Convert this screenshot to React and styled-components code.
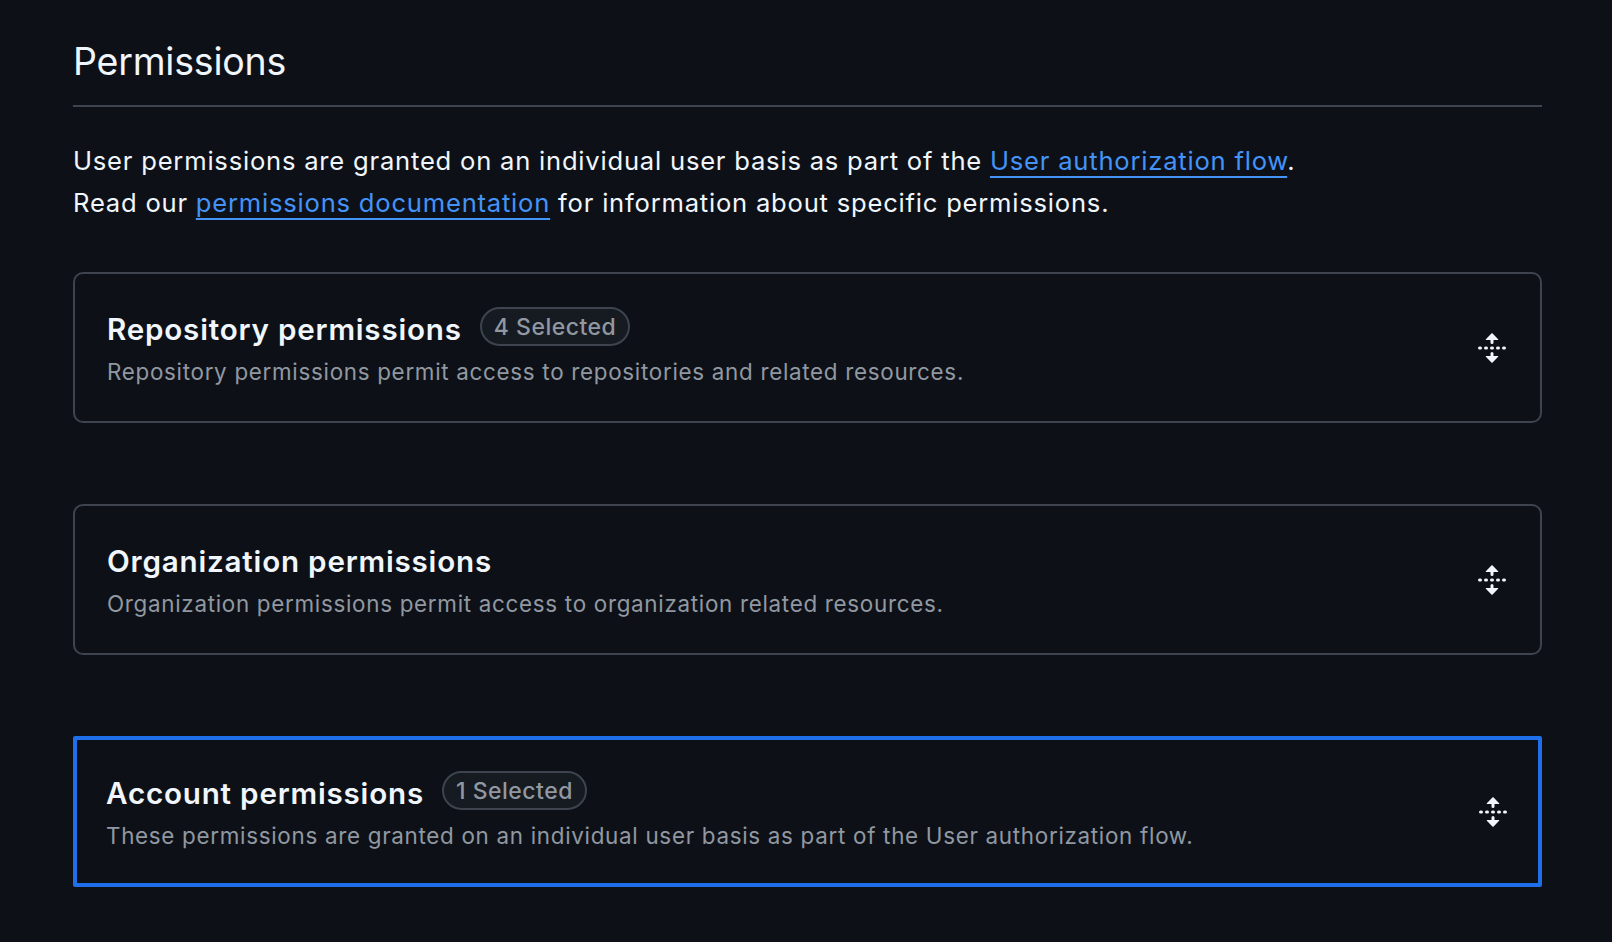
import React from "react"
import styled, { createGlobalStyle } from "styled-components"

const GlobalStyle = createGlobalStyle`
  html, body {
    margin: 0;
    padding: 0;
    background: #0d1117;
  }
  body {
    font-family: Inter, "Noto Sans", "Liberation Sans", sans-serif;
    color: #f0f6fc;
  }
`

const Page = styled.div`
  padding: 33px 70px 40px 73px;
  min-height: 100vh;
  box-sizing: border-box;
  background: #0d1117;
`

const Subhead = styled.div`
  padding-bottom: 15px;
  border-bottom: 2px solid #3d444d;
`

const Heading = styled.h2`
  margin: 0;
  font-size: 37.5px;
  line-height: 57px;
  font-weight: 400;
  letter-spacing: -0.2px;
  color: #f0f6fc;
`

const Intro = styled.p`
  margin: 33px 0 0;
  font-size: 25.6px;
  line-height: 42px;
  letter-spacing: 0.78px;
  color: #f0f6fc;
`

const Link = styled.a`
  color: #4493f8;
  text-decoration: underline;
  text-decoration-thickness: 2px;
  text-underline-offset: 6px;
`

const List = styled.div`
  margin-top: 48px;
  display: flex;
  flex-direction: column;
  gap: 81px;
`

const Card = styled.div`
  display: flex;
  align-items: center;
  justify-content: space-between;
  min-height: 151px;
  box-sizing: border-box;
  padding: ${p => (p.$focused ? "29px" : "32px")};
  border: ${p => (p.$focused ? "4px solid #1f6feb" : "2px solid #3d444d")};
  border-radius: ${p => (p.$focused ? "2px" : "10px")};
`

const Body = styled.div`
  display: flex;
  flex-direction: column;
`

const TitleRow = styled.div`
  display: flex;
  align-items: center;
  gap: 18px;
  height: 48px;
`

const Title = styled.h3`
  margin: 0 0 4px;
  font-size: 29.6px;
  line-height: 44px;
  font-weight: 600;
  letter-spacing: 0.8px;
  color: #f0f6fc;
`

const Badge = styled.span`
  display: inline-flex;
  align-items: center;
  height: 39px;
  margin-bottom: 8px;
  box-sizing: border-box;
  padding: 0 12px;
  border: 2px solid #3d444d;
  border-radius: 999px;
  background: #161b22;
  color: #9198a1;
  font-size: 23px;
  font-weight: 500;
  letter-spacing: 0.5px;
`

const Desc = styled.p`
  margin: 0;
  font-size: 22.4px;
  line-height: 34px;
  letter-spacing: 0.7px;
  color: #9198a1;
`

const Toggle = styled.button`
  display: flex;
  align-items: center;
  justify-content: center;
  padding: 0;
  border: 0;
  background: none;
  color: #f0f6fc;
  cursor: pointer;
`

const UnfoldIcon = () => (
  <svg width="32" height="32" viewBox="0 0 16 16" fill="currentColor">
    <path d="m8.177.677 2.896 2.896a.25.25 0 0 1-.177.427H8.75v1.25a.75.75 0 0 1-1.5 0V4H5.104a.25.25 0 0 1-.177-.427L7.823.677a.25.25 0 0 1 .354 0ZM7.250 10.75a.75.75 0 0 1 1.5 0V12h2.146a.25.25 0 0 1 .177.427l-2.896 2.896a.25.25 0 0 1-.354 0l-2.896-2.896A.25.25 0 0 1 5.104 12H7.25v-1.250Zm-5-2a.75.75 0 0 0 0-1.5h-.5a.75.75 0 0 0 0 1.5h.5ZM6 8a.75.75 0 0 1-.75.75h-.5a.75.75 0 0 1 0-1.5h.5A.75.75 0 0 1 6 8Zm2.25.75a.75.75 0 0 0 0-1.5h-.5a.75.75 0 0 0 0 1.5h.5ZM12 8a.75.75 0 0 1-.75.75h-.5a.75.75 0 0 1 0-1.5h.5A.75.75 0 0 1 12 8Zm2.25.75a.75.75 0 0 0 0-1.5h-.5a.75.75 0 0 0 0 1.5h.5Z" />
  </svg>
)

const groups = [
  {
    title: "Repository permissions",
    selected: 4,
    desc: "Repository permissions permit access to repositories and related resources.",
  },
  {
    title: "Organization permissions",
    desc: "Organization permissions permit access to organization related resources.",
  },
  {
    title: "Account permissions",
    selected: 1,
    desc: "These permissions are granted on an individual user basis as part of the User authorization flow.",
    focused: true,
  },
]

export default function App() {
  return (
    <Page>
      <GlobalStyle />
      <Subhead>
        <Heading>Permissions</Heading>
      </Subhead>
      <Intro>
        User permissions are granted on an individual user basis as part of the{" "}
        <Link href="#">User authorization flow</Link>.
        <br />
        Read our <Link href="#">permissions documentation</Link> for information about
        specific permissions.
      </Intro>
      <List>
        {groups.map(g => (
          <Card key={g.title} $focused={g.focused}>
            <Body>
              <TitleRow>
                <Title>{g.title}</Title>
                {g.selected && <Badge>{g.selected} Selected</Badge>}
              </TitleRow>
              <Desc>{g.desc}</Desc>
            </Body>
            <Toggle aria-label="Expand">
              <UnfoldIcon />
            </Toggle>
          </Card>
        ))}
      </List>
    </Page>
  )
}
